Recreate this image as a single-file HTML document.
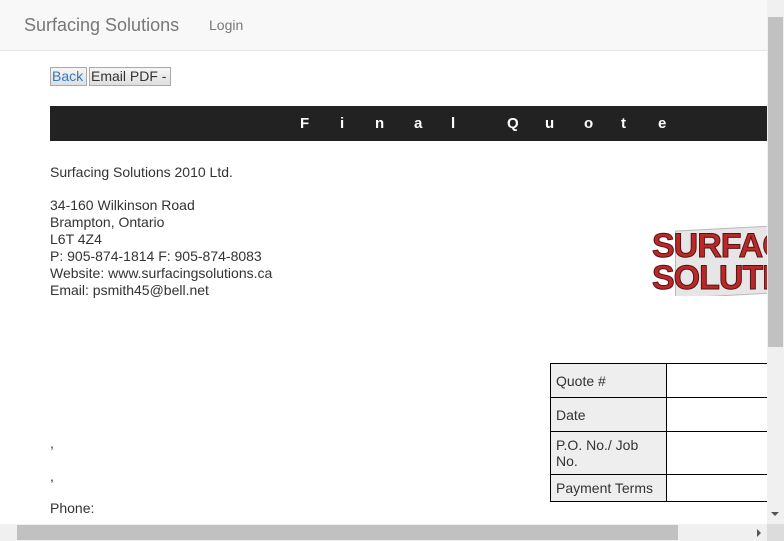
<!DOCTYPE html>
<html><head><meta charset="utf-8"><style>
body{margin:0;width:784px;height:541px;overflow:hidden;position:relative;font-family:"Liberation Sans",sans-serif;color:#333;background:#fff;font-size:14px}
.nav{position:absolute;left:0;top:0;width:784px;height:50px;background:#f8f8f8;border-bottom:1px solid #e7e7e7}
.brand{position:absolute;left:24px;top:15px;font-size:18px;color:#777}
.login{position:absolute;left:209px;top:17px;font-size:14px;color:#777}
.btn{position:absolute;top:67px;height:17px;border:1px solid #a9a9a9;background:linear-gradient(#f6f6f6,#dedede);font-size:14px;line-height:17px;padding:0 1px;box-sizing:content-box}
.bar{position:absolute;left:50px;top:106px;width:717px;height:35px;background:#222;color:#fff;font-weight:bold;font-size:15px;line-height:35px}
.bar span{position:absolute;top:0}
.t{position:absolute;left:50px;line-height:17px;font-size:14px}
table{position:absolute;left:550px;top:363px;border-collapse:collapse;font-size:14px}
td{border:1px solid #000;padding:0 5px;vertical-align:middle;line-height:16px}
td.l{background:#eee;width:106px}
td.r{width:110px;border-right:none}
.vs{position:absolute;left:767px;top:0;width:17px;height:524px;background:#f0f0f0}
.hs{position:absolute;left:0;top:524px;width:767px;height:17px;background:#f0f0f0}
</style></head><body>
<div class="nav"><span class="brand">Surfacing Solutions</span><span class="login">Login</span></div>
<div class="btn" style="left:50px;width:33px;color:#337ab7">Back</div>
<div class="btn" style="left:89px;width:78px;color:#333">Email PDF -</div>
<div class="bar"><span style="left:250px">F</span><span style="left:290px">i</span><span style="left:325px">n</span><span style="left:364px">a</span><span style="left:401px">l</span><span style="left:457px">Q</span><span style="left:495px">u</span><span style="left:534px">o</span><span style="left:571px">t</span><span style="left:608px">e</span></div>
<div class="t" style="top:164px">Surfacing Solutions 2010 Ltd.</div>
<div class="t" style="top:197px">34-160 Wilkinson Road<br>Brampton, Ontario<br>L6T 4Z4<br>P: 905-874-1814 F: 905-874-8083<br>Website: www.surfacingsolutions.ca<br>Email: psmith45@bell.net</div>
<div style="position:absolute;left:652px;top:226px;width:115px;height:70px;overflow:hidden">
<div style="position:absolute;left:23px;top:2px;width:100px;height:66px;background:#e6e6e6;border:1px solid #bbb;transform:skewY(-3deg)"></div>
<div style="position:absolute;left:0;top:4px;font:bold 34px/32px 'Liberation Sans',sans-serif;color:#b82a2a;letter-spacing:-1px;-webkit-text-stroke:1px #5a1010">SURFAC<br>SOLUTIO</div>
</div>
<table>
<tr style="height:34px"><td class="l">Quote #</td><td class="r"></td></tr>
<tr style="height:34px"><td class="l">Date</td><td class="r"></td></tr>
<tr style="height:43px"><td class="l">P.O. No./ Job No.</td><td class="r"></td></tr>
<tr style="height:27px"><td class="l">Payment Terms</td><td class="r"></td></tr>
</table>
<div class="t" style="top:435px">,</div>
<div class="t" style="top:468px">,</div>
<div class="t" style="top:500px">Phone:</div>
<div class="vs"><div style="position:absolute;left:1px;top:17px;width:15px;height:330px;background:#c1c1c1"></div>
<div style="position:absolute;left:4px;top:512px;border-left:4px solid transparent;border-right:4px solid transparent;border-top:4px solid #555"></div></div>
<div class="hs"><div style="position:absolute;left:17px;top:1px;width:661px;height:15px;background:#c1c1c1"></div>
<div style="position:absolute;left:757px;top:5px;border-top:4px solid transparent;border-bottom:4px solid transparent;border-left:4px solid #555"></div></div>
<div style="position:absolute;left:767px;top:524px;width:17px;height:17px;background:#dcdcdc"></div>
</body></html>
